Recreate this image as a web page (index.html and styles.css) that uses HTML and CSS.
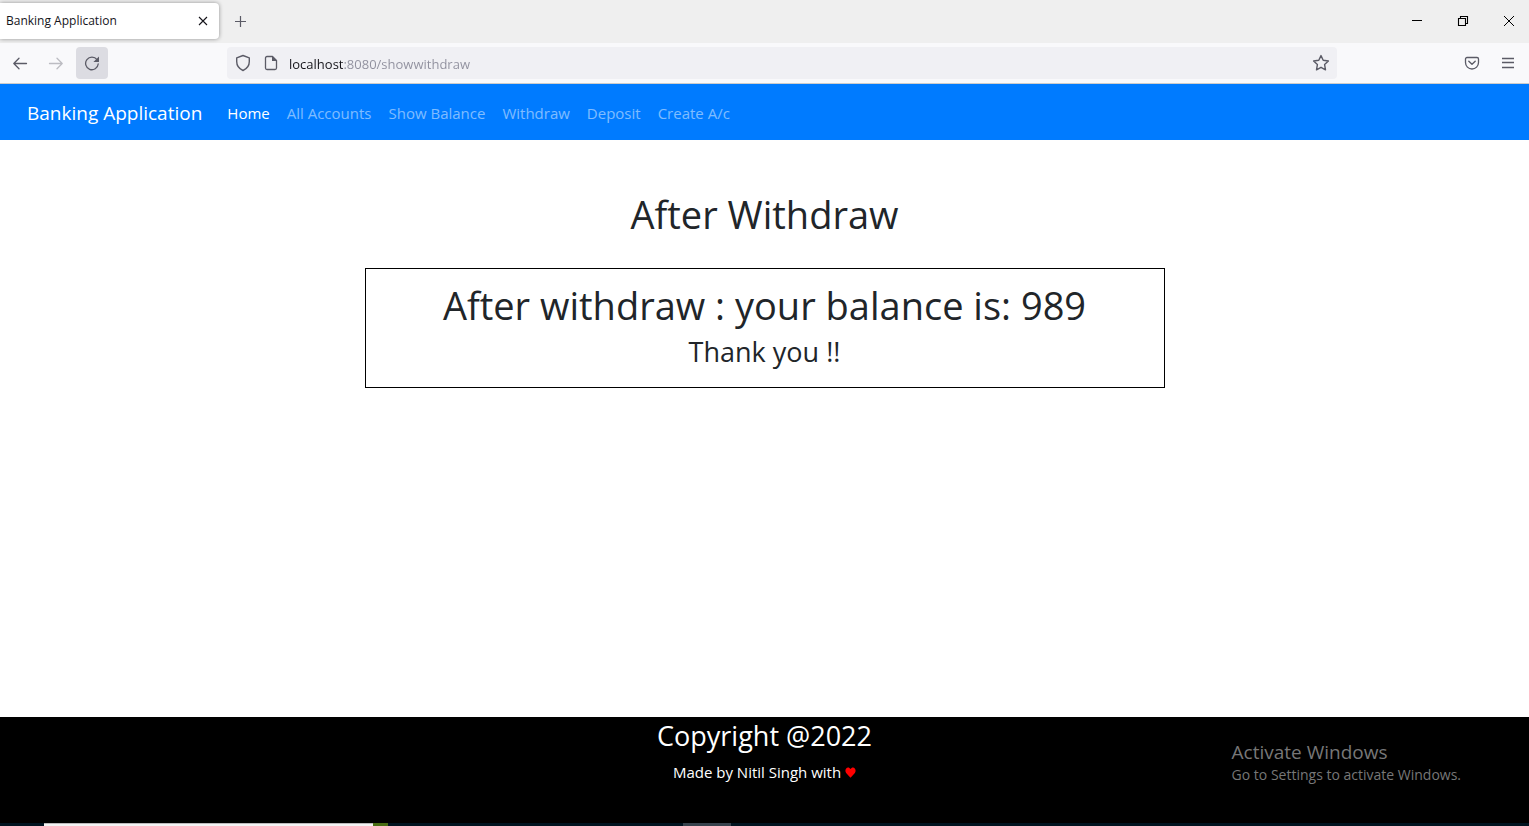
FILE: index.html
```html
<!DOCTYPE html>
<html lang="en">
<head>
<meta charset="utf-8">
<title>Banking Application</title>
<link rel="stylesheet" href="styles.css">
</head>
<body>
<header class="browser">
  <div class="tab-strip">
    <div class="tab">
      <span class="tab-title">Banking Application</span>
      <button class="icon-button tab-close" aria-label="Close tab"><svg width="10" height="10" viewBox="0 0 10 10"><path d="M1 1l8 8M9 1L1 9" stroke="#15141a" stroke-width="1.1" fill="none"/></svg></button>
    </div>
    <button class="icon-button new-tab" aria-label="New tab"><svg width="13" height="13" viewBox="0 0 13 13"><path d="M6.500 1v11M1 6.500h11" stroke="#5b5b66" stroke-width="1.2" fill="none"/></svg></button>
    <div class="window-controls">
      <button class="icon-button window-button" aria-label="Minimize"><svg width="12" height="12" viewBox="0 0 12 12"><path d="M1 5.500h10" stroke="#000" fill="none"/></svg></button>
      <button class="icon-button window-button" aria-label="Restore"><svg width="12" height="12" viewBox="0 0 12 12"><path d="M1.500 3.500h7v7h-7zM3.500 3V1.500h7v7H9" stroke="#000" stroke-width="1.100" fill="none"/></svg></button>
      <button class="icon-button window-button" aria-label="Close"><svg width="12" height="12" viewBox="0 0 12 12"><path d="M1 1l10 10M11 1L1 11" stroke="#000" fill="none"/></svg></button>
    </div>
  </div>
  <div class="toolbar">
    <div class="history">
      <button class="icon-button tool" aria-label="Back"><svg width="16" height="16" viewBox="0 0 16 16"><path d="M14.500 8.500H1.800M7 3.300L1.800 8.500l5.200 5.200" stroke="#5b5b66" stroke-width="1.300" stroke-linecap="round" stroke-linejoin="round" fill="none"/></svg></button>
      <button class="icon-button tool" aria-label="Forward" disabled><svg width="16" height="16" viewBox="0 0 16 16"><path d="M1.500 8.500h12.700M9 3.300l5.200 5.200L9 13.700" stroke="#bcbcc2" stroke-width="1.300" stroke-linecap="round" stroke-linejoin="round" fill="none"/></svg></button>
      <button class="icon-button tool tool-active" aria-label="Reload"><svg width="16" height="16" viewBox="0 0 16 16"><path d="M13 4.700A6.300 6.300 0 1 0 14.200 9" stroke="#5b5b66" stroke-width="1.300" stroke-linecap="round" fill="none"/><path d="M15 1.500v5a.6.6 0 0 1-.6.600H9.400z" fill="#5b5b66"/></svg></button>
    </div>
    <div class="address-bar">
      <button class="icon-button" aria-label="Tracking protection"><svg width="16" height="18" viewBox="0 0 16 18"><path d="M8 1.500l6.300 2.300v3.700c0 4-2.200 7.200-6.300 9-4.100-1.800-6.300-5-6.300-9V3.800z" stroke="#5b5b66" stroke-width="1.400" stroke-linejoin="round" fill="none"/></svg></button>
      <button class="icon-button" aria-label="Site information"><svg width="16" height="16" viewBox="0 0 16 16"><path d="M9.500 1.500H4A1.500 1.500 0 0 0 2.500 3v10A1.500 1.500 0 0 0 4 14.500h8a1.500 1.500 0 0 0 1.500-1.500V5.500z" stroke="#5b5b66" stroke-width="1.300" stroke-linejoin="round" fill="none"/><path d="M9 1l5 5H9z" fill="#5b5b66"/></svg></button>
      <input class="address" type="text" aria-label="Address" value="localhost:8080/showwithdraw">
      <button class="icon-button" aria-label="Bookmark this page"><svg width="18" height="18" viewBox="0 0 18 18"><path d="M9 1.600l2.200 4.700 5.200.7-3.800 3.600.9 5.200L9 13.300l-4.500 2.500.9-5.200L1.600 7l5.200-.7z" stroke="#5b5b66" stroke-width="1.400" stroke-linejoin="round" fill="none"/></svg></button>
    </div>
    <div class="extras">
      <button class="icon-button tool" aria-label="Save to Pocket"><svg width="16" height="16" viewBox="0 0 16 16"><path d="M3 2.500h10a1.500 1.500 0 0 1 1.500 1.500v3.500a6.500 6.500 0 0 1-13 0V4A1.500 1.500 0 0 1 3 2.500z" stroke="#5b5b66" stroke-width="1.300" fill="none"/><path d="M4.800 6.300L8 9.300l3.200-3" stroke="#5b5b66" stroke-width="1.400" stroke-linecap="round" stroke-linejoin="round" fill="none"/></svg></button>
      <button class="icon-button tool" aria-label="Open menu"><svg width="14" height="14" viewBox="0 0 14 14"><path d="M1 2.500h12M1 6.500h12M1 11.500h12" stroke="#5b5b66" stroke-width="1.300" fill="none"/></svg></button>
    </div>
  </div>
</header>
<nav class="navbar">
  <a class="brand" href="#">Banking Application</a>
  <a class="nav-link nav-link-active" href="#">Home</a>
  <a class="nav-link" href="#">All Accounts</a>
  <a class="nav-link" href="#">Show Balance</a>
  <a class="nav-link" href="#">Withdraw</a>
  <a class="nav-link" href="#">Deposit</a>
  <a class="nav-link" href="#">Create A/c</a>
</nav>
<main class="content">
  <h1 class="title">After Withdraw</h1>
  <section class="result">
    <h2 class="balance">After withdraw : your balance is: 989</h2>
    <p class="thanks">Thank you !!</p>
  </section>
</main>
<footer class="footer">
  <h3 class="copyright">Copyright @2022</h3>
  <p class="credit">Made by Nitil Singh with <svg class="heart" role="img" aria-label="love" width="11" height="11" viewBox="0 0 12 11" preserveAspectRatio="none"><path d="M6 10.800L1.200 5.900C-1 3 2-.8 4.800 1L6 2.100 7.200 1C10-.8 13 3 10.800 5.900z" fill="#f00"/></svg></p>
</footer>
<div class="taskbar"><span class="task-search"></span><span class="task-picture"></span><span class="task-running"></span></div>
<aside class="watermark">
  <p class="watermark-title">Activate Windows</p>
  <p class="watermark-text">Go to Settings to activate Windows.</p>
</aside>
</body>
</html>
```
FILE: styles.css
```css
* { box-sizing: border-box; }

body {
  margin: 0;
  min-height: 100vh;
  display: flex;
  flex-direction: column;
  background: #fff;
  color: #212529;
  font-family: "Open Sans", "Noto Sans", sans-serif;
  font-size: 15px;
  line-height: 24px;
}

h1, h2, h3, p { margin: 0; font-weight: 400; }

.icon-button {
  display: inline-flex;
  align-items: center;
  justify-content: center;
  flex: none;
  padding: 0;
  border: 0;
  background: transparent;
}

.tab-strip {
  display: flex;
  align-items: center;
  height: 43px;
  padding-bottom: 1px;
  background: #efefef;
}

.tab {
  display: flex;
  align-items: center;
  justify-content: space-between;
  width: 219px;
  height: 36px;
  padding: 0 8px 0 6px;
  border-radius: 0 4px 4px 0;
  background: #fff;
  box-shadow: 0 0 4px rgba(0, 0, 0, 0.4);
}

.tab-title { color: #15141a; font-size: 12px; }
.tab-close { width: 16px; height: 16px; }
.new-tab { width: 31px; height: 32px; margin-left: 6px; }
.window-controls { display: flex; margin-left: auto; padding-right: 14px; gap: 34px; }
.window-button { width: 12px; height: 12px; }

.toolbar {
  display: flex;
  align-items: center;
  height: 41px;
  padding: 0 5px 0 4px;
  border-bottom: 1px solid #ccc;
  background: #f9f9fb;
}

.history, .extras { display: flex; gap: 4px; }
.tool { width: 32px; height: 32px; border-radius: 4px; }
.tool-active { background: #dcdce2; }

.address-bar {
  display: flex;
  flex: 1;
  align-items: center;
  gap: 12px;
  height: 32px;
  margin: 0 119px;
  padding: 0 7px 0 8px;
  border-radius: 4px;
  background: #f0f0f4;
}

.address {
  flex: 1;
  min-width: 0;
  height: 26px;
  padding: 2px 0 0;
  margin-left: -2px;
  border: 0;
  outline: 0;
  background: linear-gradient(to right, #15141a 54px, #8f8f9d 54px);
  -webkit-background-clip: text;
  background-clip: text;
  color: #8f8f9d;
  -webkit-text-fill-color: transparent;
  font: 13px/24px "Open Sans", sans-serif;
}

.navbar {
  display: flex;
  align-items: center;
  gap: 17px;
  height: 56px;
  padding: 2px 27px 0;
  background: #007bff;
}

.brand { margin-right: 8px; color: #fff; font-size: 19px; text-decoration: none; }
.nav-link { color: rgba(255, 255, 255, 0.5); text-decoration: none; }
.nav-link-active { color: #fff; }

.content {
  flex: 1;
  display: flex;
  flex-direction: column;
  align-items: center;
  gap: 30px;
  padding: 50px 16px 16px;
}

.title, .balance { font-size: 38px; line-height: 48px; }

.result {
  width: 100%;
  max-width: 800px;
  min-height: 120px;
  padding: 12px 8px;
  border: 1px solid #000;
  text-align: center;
}

.thanks, .copyright { font-size: 27px; line-height: 38px; }
.thanks { padding-top: 4px; }

.footer {
  min-height: 106px;
  background: #000;
  color: #fff;
  text-align: center;
}

.credit { padding-top: 5px; }
.heart { vertical-align: 0; }

.taskbar { display: flex; height: 3px; padding-left: 44px; background: #001420; }
.task-search { width: 329px; border-top: 1px solid #bbb; background: #f3f3f3; }
.task-picture { width: 15px; background: #476c12; }
.task-running { width: 48px; margin-left: 295px; background: #36424c; }

.watermark { position: absolute; right: 68px; bottom: 40px; color: #777; }
.watermark-title { font-size: 19px; line-height: 24px; }
.watermark-text { font-size: 14px; line-height: 22px; }
```
